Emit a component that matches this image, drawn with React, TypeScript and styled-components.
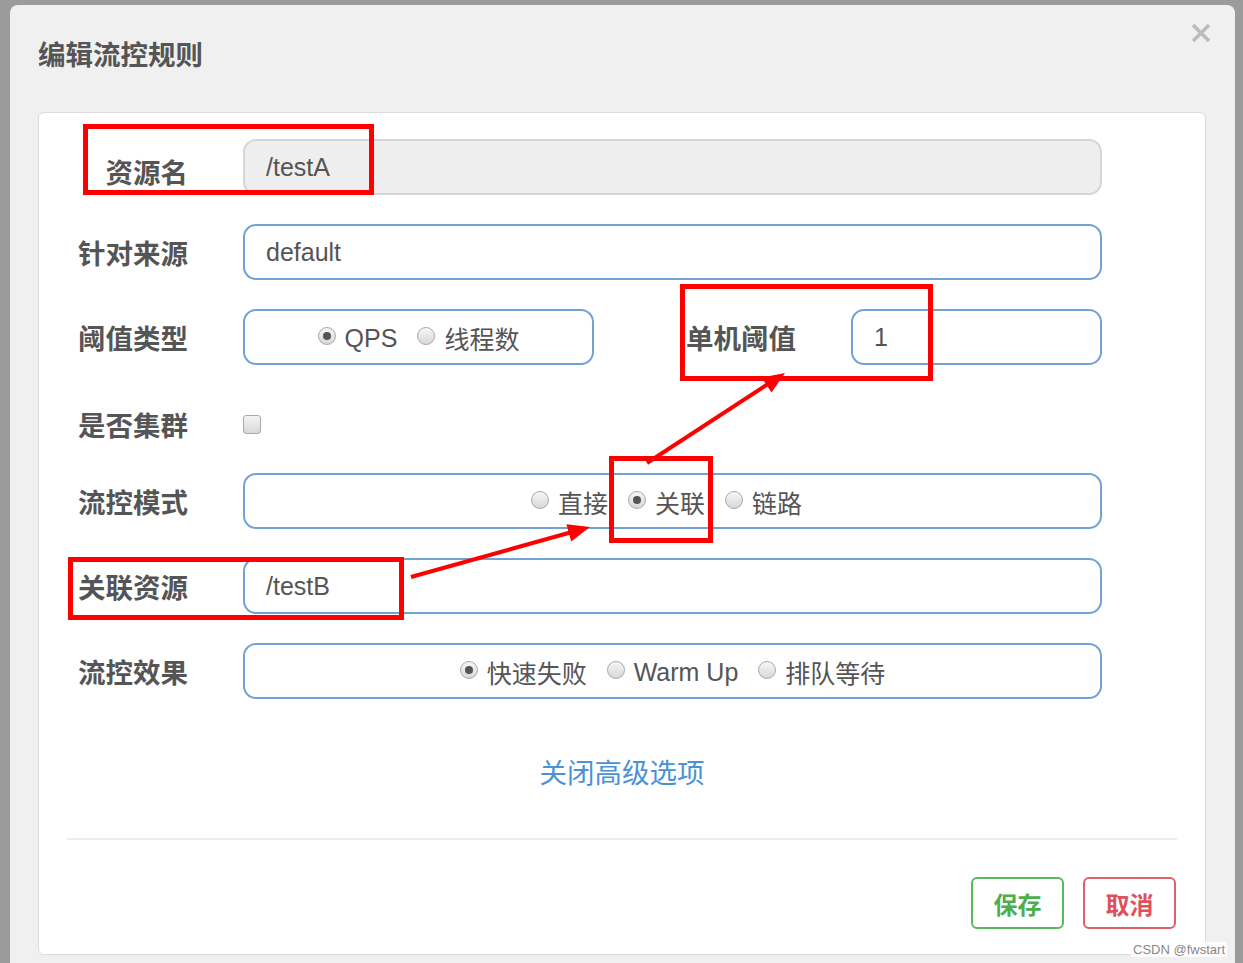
import * as React from 'react'
import styled, { createGlobalStyle } from 'styled-components'

const GlobalStyle = createGlobalStyle`
  html, body {
    margin: 0;
    padding: 0;
  }
  body {
    background: #9b9b9b;
    font-family: "Liberation Sans", "Noto Sans CJK SC", sans-serif;
  }
`

const Page = styled.div`
  position: relative;
  width: 1243px;
  height: 963px;
  overflow: hidden;
  box-sizing: border-box;
  padding: 5px 8px 0 10px;
  background: #9b9b9b;
`

const Modal = styled.div`
  background: #f0f0f0;
  border-radius: 8px 8px 0 0;
  height: 1000px;
  padding: 0 29px 0 28px;
`

const Header = styled.div`
  height: 107px;
  display: flex;
  align-items: center;
  justify-content: space-between;
`

const Title = styled.h4`
  margin: 0 0 12px 0;
  font-size: 27.5px;
  font-weight: bold;
  color: #555;
`

const Close = styled.button`
  align-self: flex-start;
  margin: 17px -6px 0 0;
  padding: 0;
  border: none;
  background: none;
  width: 22px;
  height: 22px;
  cursor: pointer;
`

const Panel = styled.div`
  background: #fff;
  border: 1px solid #dcdcdc;
  border-radius: 6px;
  height: 841px;
`

const FormBody = styled.div`
  display: flex;
  flex-direction: column;
  gap: 29px;
  padding: 26px 103px 0 39px;
`

const Row = styled.div<{ $short?: boolean }>`
  display: flex;
  align-items: center;
  height: ${({ $short }) => ($short ? '50px' : '56px')};
  ${({ $short }) => ($short ? 'box-sizing: border-box; padding-top: 10px;' : '')}
`

const Label = styled.label<{ $gap?: number; $drop?: number; $left?: boolean }>`
  flex-shrink: 0;
  width: 110px;
  margin-left: ${({ $gap }) => $gap ?? 0}px;
  margin-right: 55px;
  padding-top: ${({ $drop }) => $drop ?? 0}px;
  text-align: ${({ $left }) => ($left ? 'left' : 'right')};
  font-size: 27.5px;
  font-weight: bold;
  color: #555;
  white-space: nowrap;
`

const Input = styled.div<{ $readOnly?: boolean }>`
  flex: 1;
  height: 56px;
  box-sizing: border-box;
  display: flex;
  align-items: center;
  padding-left: 21px;
  border: 2px solid ${({ $readOnly }) => ($readOnly ? '#d6d6d6' : '#72a2d5')};
  background: ${({ $readOnly }) => ($readOnly ? '#eeeeee' : '#fff')};
  border-radius: 13px;
  font-size: 25px;
  color: #555;
`

const RadioBox = styled.div<{ $width?: number; $shift?: number }>`
  ${({ $width }) => ($width ? `width: ${$width}px; flex-shrink: 0;` : 'flex: 1;')}
  height: 56px;
  box-sizing: border-box;
  display: flex;
  align-items: center;
  justify-content: center;
  gap: 20px;
  border: 2px solid #72a2d5;
  border-radius: 13px;
  padding-top: 2px;
  padding-right: ${({ $shift }) => $shift ?? 0}px;
`

const Option = styled.span`
  display: flex;
  align-items: center;
  gap: 9px;
  font-size: 25px;
  color: #555;
`

const Radio = styled.span<{ $checked?: boolean }>`
  position: relative;
  width: 18px;
  height: 18px;
  box-sizing: border-box;
  border-radius: 50%;
  border: 1px solid #a9a9a9;
  background: linear-gradient(#f6f6f6, #d8d8d8);
  margin-top: -4px;

  &::after {
    content: '';
    display: ${({ $checked }) => ($checked ? 'block' : 'none')};
    position: absolute;
    left: 4px;
    top: 4px;
    width: 8px;
    height: 8px;
    border-radius: 50%;
    background: #555;
  }
`

const Checkbox = styled.span`
  width: 18px;
  height: 19px;
  box-sizing: border-box;
  border: 1px solid #a9a9a9;
  border-radius: 3px;
  background: linear-gradient(#f4f4f4, #d9d9d9);
`

const LinkRow = styled.div`
  display: flex;
  justify-content: center;
  margin-top: 52px;
`

const ToggleLink = styled.a`
  font-size: 27.5px;
  color: #4b91d6;
  text-decoration: none;
  cursor: pointer;
`

const Divider = styled.div`
  margin: 47px 28px 0;
  height: 2px;
  background: #ececec;
`

const Footer = styled.div`
  display: flex;
  justify-content: flex-end;
  gap: 19px;
  padding: 37px 29px 0 0;
`

const ActionButton = styled.button<{ $tone: 'green' | 'red' }>`
  width: 93px;
  height: 52px;
  border-radius: 6px;
  background: #fff;
  border: 2px solid ${({ $tone }) => ($tone === 'green' ? '#5cb85c' : '#e0606a')};
  color: ${({ $tone }) => ($tone === 'green' ? '#4cae4c' : '#e0505c')};
  font-family: "Noto Sans CJK SC", sans-serif;
  font-size: 24px;
  font-weight: bold;
  cursor: pointer;
`

const Annotations = styled.svg`
  position: absolute;
  left: 0;
  top: 0;
  pointer-events: none;
`

const Watermark = styled.span`
  position: absolute;
  right: 16px;
  bottom: 6px;
  font-size: 13px;
  color: #888;
  background: rgba(255, 255, 255, 0.85);
  padding: 0 2px;
`

const RED = '#ff0000'

export default function App() {
  return (
    <>
      <GlobalStyle />
      <Page>
        <Modal>
          <Header>
            <Title>编辑流控规则</Title>
            <Close aria-label="close">
              <svg width="22" height="22" viewBox="0 0 22 22">
                <path d="M3 3 L19 19 M19 3 L3 19" stroke="#bcbcbc" strokeWidth="3.6" strokeLinecap="butt" />
              </svg>
            </Close>
          </Header>

          <Panel>
            <FormBody>
              <Row>
                <Label $drop={8}>资源名</Label>
                <Input $readOnly>/testA</Input>
              </Row>

              <Row>
                <Label>针对来源</Label>
                <Input>default</Input>
              </Row>

              <Row>
                <Label>阈值类型</Label>
                <RadioBox $width={351}>
                  <Option>
                    <Radio $checked />
                    QPS
                  </Option>
                  <Option>
                    <Radio />
                    线程数
                  </Option>
                </RadioBox>
                <Label $gap={92} $left>
                  单机阈值
                </Label>
                <Input>1</Input>
              </Row>

              <Row $short>
                <Label>是否集群</Label>
                <Checkbox />
              </Row>

              <Row>
                <Label>流控模式</Label>
                <RadioBox $shift={12}>
                  <Option>
                    <Radio />
                    直接
                  </Option>
                  <Option>
                    <Radio $checked />
                    关联
                  </Option>
                  <Option>
                    <Radio />
                    链路
                  </Option>
                </RadioBox>
              </Row>

              <Row>
                <Label>关联资源</Label>
                <Input>/testB</Input>
              </Row>

              <Row>
                <Label>流控效果</Label>
                <RadioBox>
                  <Option>
                    <Radio $checked />
                    快速失败
                  </Option>
                  <Option>
                    <Radio />
                    Warm Up
                  </Option>
                  <Option>
                    <Radio />
                    排队等待
                  </Option>
                </RadioBox>
              </Row>
            </FormBody>

            <LinkRow>
              <ToggleLink>关闭高级选项</ToggleLink>
            </LinkRow>

            <Divider />

            <Footer>
              <ActionButton $tone="green">保存</ActionButton>
              <ActionButton $tone="red">取消</ActionButton>
            </Footer>
          </Panel>
        </Modal>

        <Annotations width="1243" height="963" viewBox="0 0 1243 963">
          <g fill="none" stroke={RED} strokeWidth="5">
            <rect x="85.5" y="126.5" width="286" height="66" />
            <rect x="682.5" y="286.5" width="248" height="92" />
            <rect x="611.5" y="458.5" width="99" height="82" />
            <rect x="70.5" y="559.5" width="331" height="58" />
            <line x1="411" y1="577" x2="572" y2="532" strokeWidth="4" />
            <line x1="647" y1="463" x2="768" y2="384" strokeWidth="4" />
          </g>
          <g fill={RED}>
            <polygon points="590,527 571.2,541.6 566.4,524.2" />
            <polygon points="785,373 771.5,392.6 761.7,377.6" />
          </g>
        </Annotations>

        <Watermark>CSDN @fwstart</Watermark>
      </Page>
    </>
  )
}
